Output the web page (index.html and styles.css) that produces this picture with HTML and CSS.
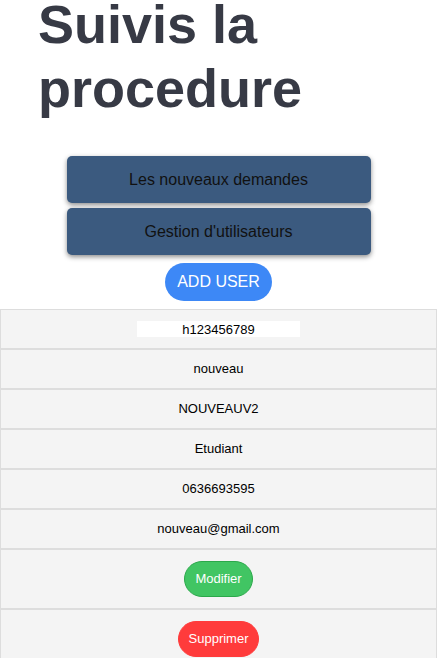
FILE: index.html
```html
<!DOCTYPE html>
<html lang="fr">
<head>
<meta charset="utf-8">
<title>Suivis la procedure</title>
<link rel="stylesheet" href="styles.css">
</head>
<body>
<h1 class="title">Suivis la procedure</h1>
<nav class="menu">
  <button class="menu-btn">Les nouveaux demandes</button>
  <button class="menu-btn">Gestion d'utilisateurs</button>
</nav>
<div class="add-wrap"><button class="add-btn">ADD USER</button></div>
<table class="users">
  <tbody>
    <tr><td><input class="cin" type="text" value="h123456789"></td></tr>
    <tr><td>nouveau</td></tr>
    <tr><td>NOUVEAUV2</td></tr>
    <tr><td>Etudiant</td></tr>
    <tr><td>0636693595</td></tr>
    <tr><td>nouveau@gmail.com</td></tr>
    <tr><td><button class="pill pill-green">Modifier</button></td></tr>
    <tr><td><button class="pill pill-red">Supprimer</button></td></tr>
  </tbody>
</table>
</body>
</html>
```
FILE: styles.css
```css
html, body {
  margin: 0;
  padding: 0;
  background: #ffffff;
  font-family: "Liberation Sans", Arial, sans-serif;
}

.title {
  margin: -8px 0 0;
  padding-left: 38px;
  font-size: 54px;
  font-weight: bold;
  line-height: 64px;
  color: #373a45;
}

.menu {
  margin-top: 36px;
  display: flex;
  flex-direction: column;
  align-items: center;
  gap: 5px;
}

.menu-btn {
  width: 304px;
  height: 47px;
  border: none;
  border-radius: 5px;
  background: #3b5a7f;
  color: #111111;
  font-family: "Liberation Sans", Arial, sans-serif;
  font-size: 16px;
  box-shadow: 0 2px 5px rgba(0, 0, 0, 0.45);
  cursor: pointer;
}

.add-wrap {
  display: flex;
  justify-content: center;
  margin-top: 8px;
}

.add-btn {
  border: none;
  border-radius: 19px;
  background: #3d88f6;
  color: #ffffff;
  font-family: "Liberation Sans", Arial, sans-serif;
  font-size: 16px;
  line-height: 18px;
  padding: 10px 12px;
  cursor: pointer;
}

.users {
  margin-top: 8px;
  width: 100%;
  border-collapse: separate;
  border-spacing: 0;
}

.users td {
  background: #f4f4f4;
  border: 1px solid #dddddd;
  padding: 11px 0;
  text-align: center;
  font-size: 13px;
  line-height: 16px;
  color: #000000;
}

.cin {
  display: block;
  margin: 0 auto;
  width: 163px;
  height: 16px;
  padding: 0;
  border: none;
  background: #ffffff;
  text-align: center;
  font-family: "Liberation Sans", Arial, sans-serif;
  font-size: 13px;
  color: #000000;
}

.pill {
  border-radius: 18px;
  color: #ffffff;
  font-family: "Liberation Sans", Arial, sans-serif;
  font-size: 13px;
  line-height: 14px;
  padding: 10px 10px;
  vertical-align: top;
  cursor: pointer;
}

.pill-green {
  background: #41c563;
  border: 1px solid #2ba84a;
}

.pill-red {
  background: #ff3b3b;
  border: 1px solid #ff3b3b;
}
```
